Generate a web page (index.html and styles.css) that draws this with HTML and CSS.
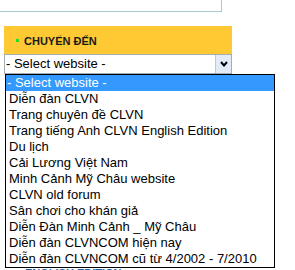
FILE: index.html
```html
<!DOCTYPE html>
<html lang="vi">
<head>
  <meta charset="UTF-8">
  <title>Chuyển đến</title>
  <link rel="stylesheet" href="styles.css">
</head>
<body>

  <div class="topbox"></div>

  <div class="widget">
    <div class="widget-head"><span class="bullet"></span>CHUYỂN ĐẾN</div>

    <div class="combo">
      <div class="combo-field">
        <span class="combo-value">- Select website -</span>
        <span class="combo-btn">
          <svg width="8" height="6" viewBox="0 0 8 6"><polyline points="1,1 4,4.5 7,1" fill="none" stroke="#000" stroke-width="2"/></svg>
        </span>
      </div>

      <!-- open dropdown -->
      <ul class="combo-list">
        <li class="active">- Select website -</li>
        <li>Diễn đàn CLVN</li>
        <li>Trang chuyên đề CLVN</li>
        <li>Trang tiếng Anh CLVN English Edition</li>
        <li>Du lịch</li>
        <li>Cải Lương Việt Nam</li>
        <li>Minh Cảnh Mỹ Châu website</li>
        <li>CLVN old forum</li>
        <li>Sân chơi cho khán giả</li>
        <li>Diễn Đàn Minh Cảnh _ Mỹ Châu</li>
        <li>Diễn đàn CLVNCOM hiện nay</li>
        <li>Diễn đàn CLVNCOM cũ từ 4/2002 - 7/2010</li>
      </ul>
    </div>

    <div class="english">ENGLISH EDITION</div>
  </div>

</body>
</html>
```

FILE: styles.css
```css
* {
  box-sizing: border-box;
}

body {
  margin: 0;
  font-family: 'Liberation Sans', Arial, sans-serif;
  background: #fff;
  color: #000;
}

.topbox {
  width: 222px;
  height: 12px;
  border-right: 1px solid #a9c6d4;
  border-bottom: 1px solid #a9c6d4;
}

.widget {
  width: 228px;
  margin: 14px 0 0 4px;
}

.widget-head {
  height: 28px;
  display: flex;
  align-items: center;
  gap: 5px;
  padding: 1px 0 0 12px;
  background: #fec933;
  color: #1a1a1a;
  font-size: 11px;
  font-weight: bold;
}

.bullet {
  width: 3px;
  height: 3px;
  background: #22dd22;
}

.combo {
  position: relative;
}

.combo-field {
  height: 20px;
  display: flex;
  border: 1px solid #a5acb2;
  background: #fff;
}

.combo-value {
  flex: 1;
  padding-left: 1px;
  font-size: 13px;
  line-height: 18px;
}

.combo-btn {
  width: 16px;
  display: flex;
  align-items: center;
  justify-content: center;
  background: #e1ecf8;
  border-left: 1px solid #b6c9e2;
}

.combo-list {
  position: absolute;
  top: 20px;
  left: 1px;
  width: 270px;
  margin: 0;
  padding: 0;
  list-style: none;
  background: #fff;
  border: 1px solid #000;
  font-size: 13px;
}

.combo-list li {
  height: 16px;
  line-height: 16px;
  padding-left: 3px;
  white-space: nowrap;
}

.combo-list li.active {
  background: #3399ff;
  color: #fff;
  padding-left: 1px;
}

.english {
  margin-top: 193px;
  padding-left: 21px;
  font-size: 11px;
  line-height: 13px;
  font-weight: bold;
  color: #1f5fae;
}
```
